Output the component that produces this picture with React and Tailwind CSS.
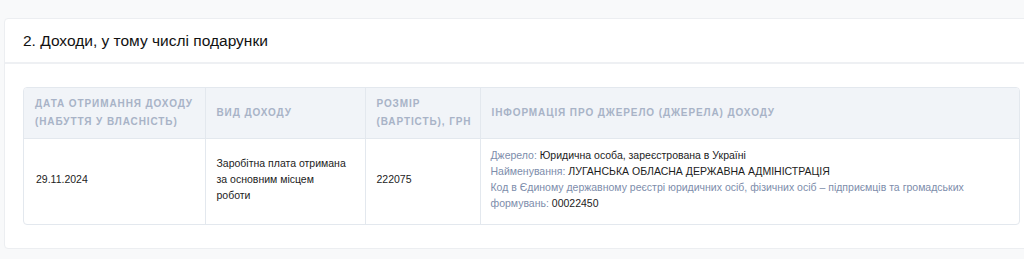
import React from 'react';

const headers = [
    ['Дата отримання доходу', '(набуття у власність)'],
    ['Вид доходу'],
    ['Розмір', '(вартість), грн'],
    ['Інформація про джерело (джерела) доходу'],
];

const Label = ({ children }) => <span className="text-[#7d8dab]">{children}</span>;

const App = () => {
    return (
        <div className="h-[259px] w-full overflow-hidden bg-[#f8f9fa] pt-[18px] pl-[4px] font-['Liberation_Sans',Arial,sans-serif]">
            <div className="w-[1040px] rounded-[4px] border border-[#eceef1] bg-white">
                <div className="flex h-[45px] items-center border-b-2 border-[#eef0f3] px-[18px] text-[15.5px] text-[#111]">
                    2. Доходи, у тому числі подарунки
                </div>

                <div className="px-[18px] pt-[23px] pb-[23px]">
                    <div className="w-[997px] overflow-hidden rounded-[4px] border border-[#e3e8ee]">
                        <table className="w-full table-fixed border-collapse text-left">
                            <colgroup>
                                <col className="w-[181px]" />
                                <col className="w-[160px]" />
                                <col className="w-[115px]" />
                                <col />
                            </colgroup>
                            <thead>
                                <tr className="h-[50px] bg-[#f1f4f8]">
                                    {headers.map((h, i) => (
                                        <th
                                            key={h[0]}
                                            className={
                                                'px-[11px] align-middle whitespace-nowrap text-[10px] leading-[18px] font-bold uppercase tracking-[0.09em] text-[#a8b3c7] ' +
                                                (i > 0 ? 'border-l border-[#e3e8ee]' : '')
                                            }
                                        >
                                            {h.map((line) => (
                                                <div key={line}>{line}</div>
                                            ))}
                                        </th>
                                    ))}
                                </tr>
                            </thead>
                            <tbody className="text-[10.5px] leading-[16px] text-[#1c1c1c]">
                                <tr className="h-[86px] border-t border-[#e3e8ee]">
                                    <td className="px-[12px] pb-[5px] align-middle">29.11.2024</td>
                                    <td className="border-l border-[#e3e8ee] px-[11px] pb-[5px] align-middle">
                                        Заробітна плата отримана
                                        <br />
                                        за основним місцем
                                        <br />
                                        роботи
                                    </td>
                                    <td className="border-l border-[#e3e8ee] px-[11px] pb-[5px] align-middle">222075</td>
                                    <td className="border-l border-[#e3e8ee] px-[10px] pb-[5px] align-middle">
                                        <div>
                                            <Label>Джерело:</Label> Юридична особа, зареєстрована в Україні
                                        </div>
                                        <div>
                                            <Label>Найменування:</Label> ЛУГАНСЬКА ОБЛАСНА ДЕРЖАВНА АДМІНІСТРАЦІЯ
                                        </div>
                                        <div>
                                            <Label>
                                                Код в Єдиному державному реєстрі юридичних осіб, фізичних осіб – підприємців та громадських
                                            </Label>
                                            <br />
                                            <Label>формувань:</Label> 00022450
                                        </div>
                                    </td>
                                </tr>
                            </tbody>
                        </table>
                    </div>
                </div>
            </div>
        </div>
    );
};

export default App;
